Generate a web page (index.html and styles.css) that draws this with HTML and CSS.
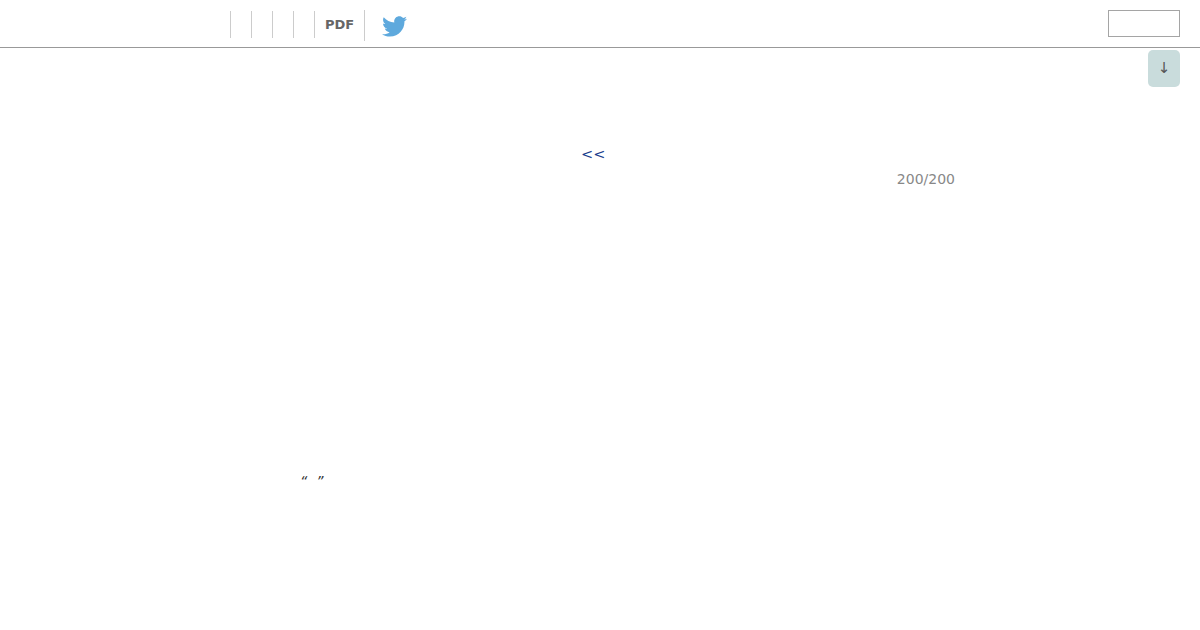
FILE: index.html
```html
<!DOCTYPE html>
<html lang="en">
<head>
    <meta charset="UTF-8">
    <meta name="viewport" content="width=device-width, initial-scale=1.0">
    <title>PDF</title>
    <link rel="stylesheet" href="styles.css">
</head>
<body>
    <!-- Top bar -->
    <header class="topbar">
        <nav class="menu">
            <a class="menu-item" href="#"></a>
            <a class="menu-item" href="#"></a>
            <a class="menu-item" href="#"></a>
            <a class="menu-item" href="#"></a>
            <a class="menu-item pdf" href="#">PDF</a>
            <a class="menu-item tweet" href="#">
                <svg class="bird" viewBox="0 0 24 24" width="25" height="25">
                    <path fill="#5ea9dd" d="M24 4.56c-.88.39-1.83.65-2.83.77 1.02-.61 1.8-1.57 2.17-2.72-.95.56-2 .97-3.13 1.2C19.32 2.78 18.04 2.2 16.62 2.2c-2.72 0-4.92 2.2-4.92 4.92 0 .39.04.76.13 1.12C7.74 8.04 4.1 6.08 1.67 3.1c-.42.73-.66 1.57-.66 2.48 0 1.71.87 3.21 2.19 4.1-.81-.03-1.57-.25-2.23-.62v.06c0 2.38 1.7 4.37 3.95 4.82-.41.11-.85.17-1.3.17-.32 0-.62-.03-.93-.09.63 1.95 2.44 3.37 4.6 3.41-1.68 1.32-3.8 2.1-6.1 2.1-.4 0-.79-.02-1.18-.07 2.18 1.4 4.77 2.21 7.55 2.21 9.06 0 14-7.5 14-14 0-.21 0-.43-.02-.64.96-.69 1.8-1.56 2.46-2.53z"/>
                </svg>
            </a>
        </nav>
        <input class="search" type="text">
    </header>

    <a class="scroll-down" href="#">↓</a>

    <!-- Page content -->
    <main class="content">
        <div class="pager"><a href="#">&lt;&lt;</a></div>
        <div class="count">200/200</div>
        <p class="quote">“&nbsp;&nbsp;”</p>
    </main>
</body>
</html>
```

FILE: styles.css
```css
* {
    margin: 0;
    padding: 0;
    box-sizing: border-box;
}

body {
    font-family: 'DejaVu Sans', sans-serif;
    background: #fff;
    color: #333;
}

a {
    text-decoration: none;
}

/* Top bar */
.topbar {
    display: flex;
    justify-content: space-between;
    align-items: flex-start;
    height: 48px;
    padding: 10px 20px 0 230px;
    border-bottom: 1px solid #999;
}

.menu {
    display: flex;
    align-items: flex-start;
    padding-top: 1px;
}

.menu-item {
    display: flex;
    align-items: center;
    height: 27px;
    padding: 0 10px;
    border-left: 1px solid #ccc;
    font-size: 13px;
    font-weight: bold;
    color: #666;
}

.menu-item.tweet {
    height: 31px;
    margin-top: -1px;
    padding: 1px 0 0 17px;
}

.search {
    width: 72px;
    height: 27px;
    border: 1px solid #a5a5a5;
    background: #fff;
}

/* Floating button */
.scroll-down {
    position: absolute;
    top: 50px;
    right: 20px;
    display: flex;
    align-items: center;
    justify-content: center;
    width: 32px;
    height: 37px;
    padding-bottom: 2px;
    border-radius: 5px;
    background: #c9dcdc;
    color: #555;
    font-size: 15px;
}

/* Page content */
.content {
    width: 655px;
    margin-left: 300px;
    padding-top: 97px;
}

.pager {
    padding-left: 281px;
    font-size: 14.5px;
    line-height: 18px;
}

.pager a {
    color: #1a3c8c;
}

.count {
    margin-top: 7px;
    text-align: right;
    font-size: 14px;
    line-height: 18px;
    color: #888;
}

.quote {
    margin-top: 283px;
    font-size: 14px;
    line-height: 20px;
    font-style: italic;
    color: #333;
}
```
